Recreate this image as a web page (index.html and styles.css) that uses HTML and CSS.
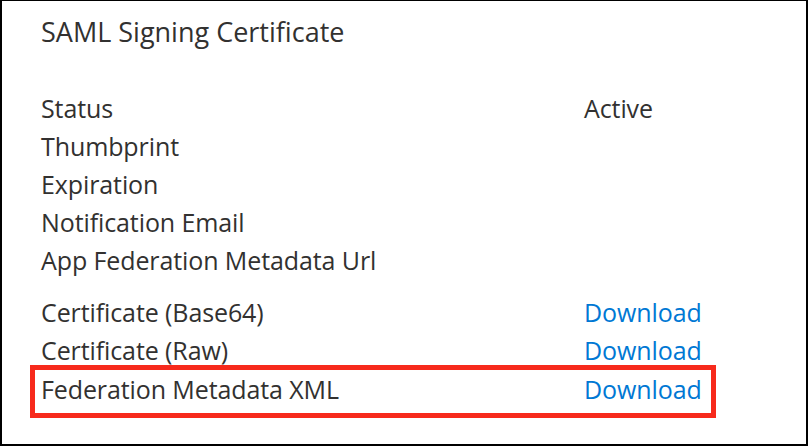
FILE: index.html
```html
<!DOCTYPE html>
<html lang="en">
<head>
<meta charset="utf-8">
<title>SAML Signing Certificate</title>
<link rel="stylesheet" href="styles.css">
</head>
<body>
<div class="panel">
  <h2 class="title">SAML Signing Certificate</h2>
  <div class="group">
    <div class="row"><span class="label">Status</span><span class="value">Active</span></div>
    <div class="row"><span class="label">Thumbprint</span><span class="value"></span></div>
    <div class="row"><span class="label">Expiration</span><span class="value"></span></div>
    <div class="row"><span class="label">Notification Email</span><span class="value"></span></div>
    <div class="row"><span class="label">App Federation Metadata Url</span><span class="value"></span></div>
  </div>
  <div class="group downloads">
    <div class="row"><span class="label">Certificate (Base64)</span><a class="link" href="#">Download</a></div>
    <div class="row"><span class="label">Certificate (Raw)</span><a class="link" href="#">Download</a></div>
    <div class="row highlight"><span class="label">Federation Metadata XML</span><a class="link" href="#">Download</a></div>
  </div>
</div>
</body>
</html>
```
FILE: styles.css
```css
* { box-sizing: border-box; }
html, body { margin: 0; padding: 0; background: #fff; }
body {
  font-family: "Open Sans", "Noto Sans", sans-serif;
  font-size: 25px;
  letter-spacing: -0.1px;
  color: #323130;
}
.panel {
  width: 808px;
  height: 446px;
  border-style: solid;
  border-color: #000;
  border-width: 1px 2px 2px 2px;
  padding: 12px 0 0 39px;
}
.title {
  margin: 0;
  font-size: 27px;
  font-weight: 400;
  letter-spacing: 0;
  line-height: 38px;
}
.group { margin-top: 38px; }
.downloads { margin-top: 14px; }
.row {
  display: grid;
  grid-template-columns: 543px auto;
  line-height: 38px;
  white-space: nowrap;
}
.link {
  color: #0078d4;
  text-decoration: none;
}
.highlight {
  width: 686px;
  margin: -4px 0 0 -11px;
  border: 5px solid #f72a1c;
  padding: 0 0 5px 6px;
}
```
